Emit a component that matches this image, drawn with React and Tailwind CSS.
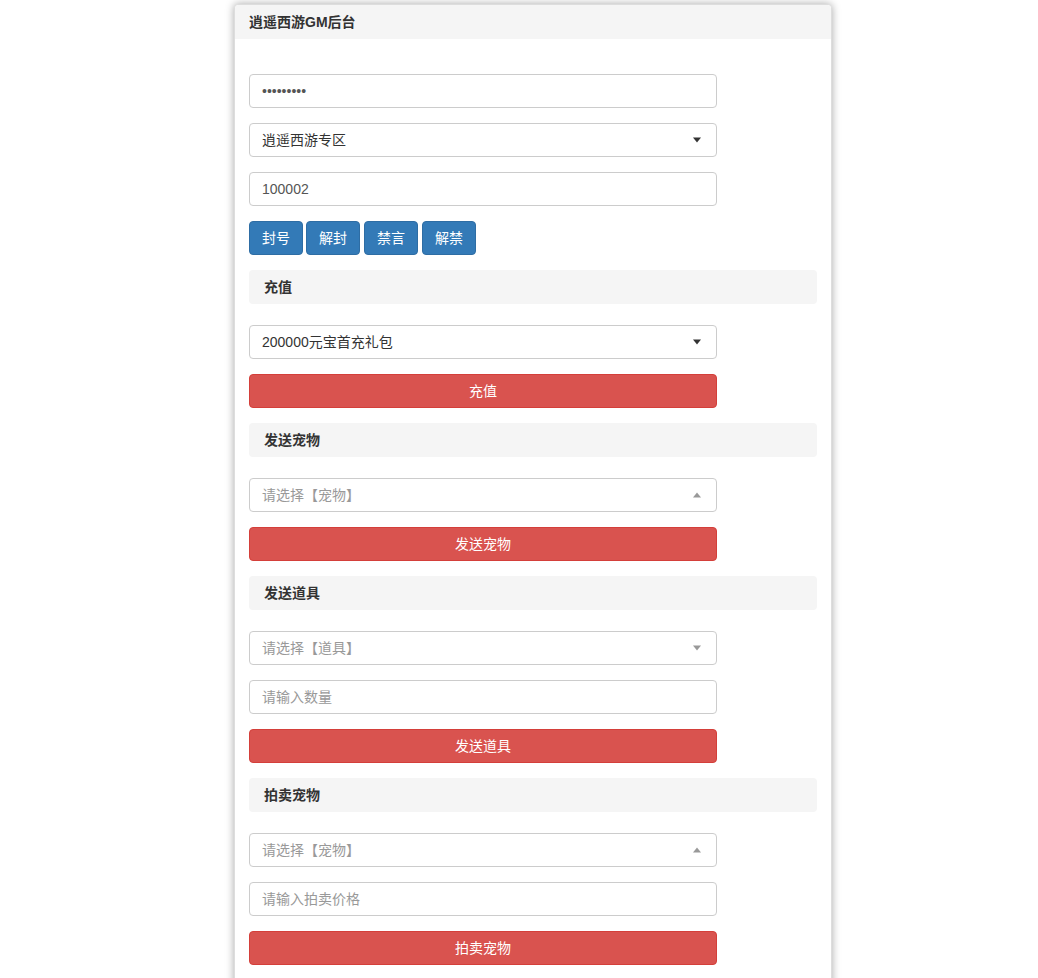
import React from 'react';

const font = { fontFamily: '"Liberation Sans", "Noto Sans CJK SC", sans-serif' };

const Caret = ({ up, dark }) => (
  <span
    className={
      'absolute right-[15px] top-1/2 -translate-y-1/2 w-0 h-0 border-l-4 border-r-4 border-l-transparent border-r-transparent ' +
      (up
        ? 'border-b-[5px] ' + (dark ? 'border-b-[#333]' : 'border-b-[#999]')
        : 'border-t-[5px] ' + (dark ? 'border-t-[#333]' : 'border-t-[#999]'))
    }
  />
);

const SelectBox = ({ text, placeholder, up }) => (
  <div className="relative w-[468px] h-[34px] border border-[#ccc] rounded bg-white flex items-center px-3 mb-[15px]">
    <span className={'text-sm ' + (placeholder ? 'text-[#999]' : 'text-[#333]')}>{text}</span>
    <Caret up={up} dark={!placeholder} />
  </div>
);

const InputBox = ({ value, placeholder, mask }) => (
  <div className="w-[468px] h-[34px] border border-[#ccc] rounded bg-white flex items-center px-3 mb-[15px]">
    {mask ? (
      <span className="text-[#555] text-sm">•••••••••</span>
    ) : (
      <span className={'text-sm ' + (value ? 'text-[#555]' : 'text-[#999]')}>{value || placeholder}</span>
    )}
  </div>
);

const RedButton = ({ label }) => (
  <button className="w-[468px] h-[34px] rounded bg-[#d9534f] border border-[#d43f3a] text-white text-sm mb-[15px]">
    {label}
  </button>
);

const SectionTitle = ({ label }) => (
  <div className="w-[568px] h-[34px] rounded bg-[#f5f5f5] flex items-center px-[15px] mb-[21px]">
    <span className="text-sm font-bold text-[#333]">{label}</span>
  </div>
);

const App = () => {
  return (
    <div className="min-h-screen bg-white pt-[4px]" style={font}>
      <div className="ml-[234px] w-[598px] bg-white border border-[#ddd] rounded shadow-[0_0_8px_rgba(0,0,0,0.35)]">
        <div className="h-[34px] bg-[#f5f5f5] flex items-center px-[14px] rounded-t">
          <span className="text-sm font-bold text-[#333]">逍遥西游GM后台</span>
        </div>
        <div className="px-[14px] pt-[35px] pb-2 flex flex-col">
          <InputBox mask />
          <SelectBox text="逍遥西游专区" />
          <InputBox value="100002" />
          <div className="flex gap-[3px] mb-[15px]">
            {['封号', '解封', '禁言', '解禁'].map((b, i) => (
              <button
                key={b}
                className={
                  'h-[34px] px-3 rounded bg-[#337ab7] border border-[#2e6da4] text-white text-sm ' +
                  (i > 1 ? 'ml-[1px]' : '')
                }
              >
                {b}
              </button>
            ))}
          </div>

          <SectionTitle label="充值" />
          <SelectBox text="200000元宝首充礼包" />
          <RedButton label="充值" />

          <SectionTitle label="发送宠物" />
          <SelectBox text="请选择【宠物】" placeholder up />
          <RedButton label="发送宠物" />

          <SectionTitle label="发送道具" />
          <SelectBox text="请选择【道具】" placeholder />
          <InputBox placeholder="请输入数量" />
          <RedButton label="发送道具" />

          <SectionTitle label="拍卖宠物" />
          <SelectBox text="请选择【宠物】" placeholder up />
          <InputBox placeholder="请输入拍卖价格" />
          <RedButton label="拍卖宠物" />
        </div>
      </div>
    </div>
  );
};

export default App;
